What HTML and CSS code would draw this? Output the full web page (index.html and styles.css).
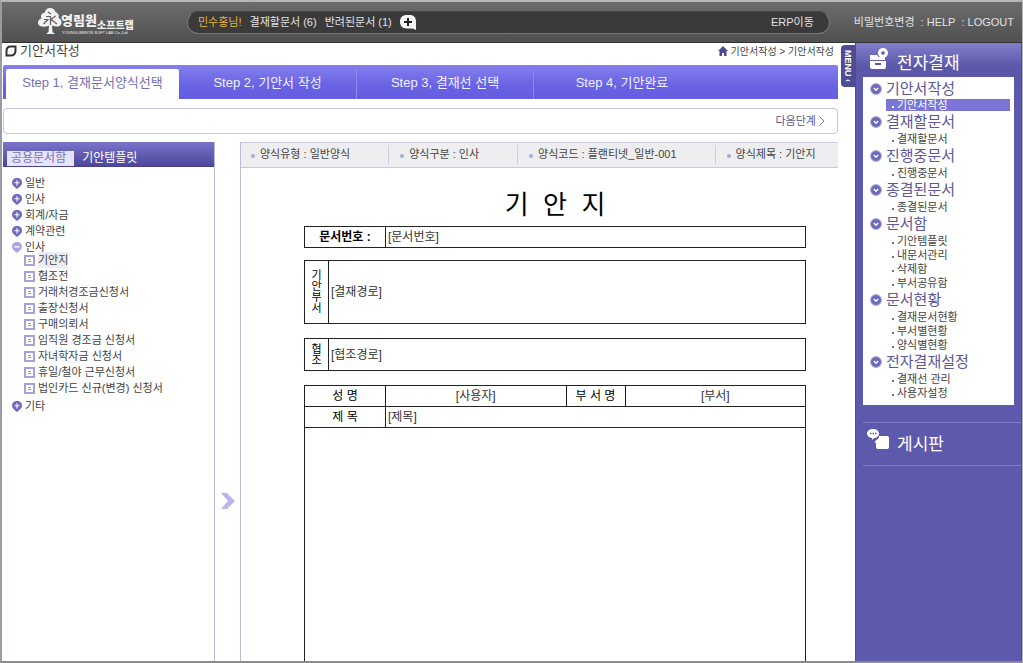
FILE: index.html
```html
<!DOCTYPE html>
<html lang="ko">
<head>
<meta charset="utf-8">
<title>기안서작성</title>
<link rel="stylesheet" href="styles.css">
</head>
<body>
<svg class="defs" aria-hidden="true">
  <symbol id="plus" viewBox="0 0 10 11"><path d="M5 0C8 0 10 2 10 4.600C10 7.500 7.500 9 5 11C2.500 9 0 7.500 0 4.600C0 2 2 0 5 0Z" fill="#6f68c0"/><path d="M5 2.200v5.200M2.400 4.800h5.200" stroke="#fff" stroke-width="1.100"/></symbol>
  <symbol id="minus" viewBox="0 0 10 11"><path d="M5 0C8 0 10 2 10 4.600C10 7.500 7.500 9 5 11C2.500 9 0 7.500 0 4.600C0 2 2 0 5 0Z" fill="#aaa5e2"/><path d="M2.400 4.800h5.200" stroke="#fff" stroke-width="1.300"/></symbol>
  <symbol id="doc" viewBox="0 0 11 11"><rect x="1" y="1" width="9" height="9" fill="#fff" stroke="#a6a2d8" stroke-width="2"/><path d="M4 4.500h3M4 6.500h3" stroke="#8f8bd0"/></symbol>
  <symbol id="down" viewBox="0 0 12 12"><circle cx="6" cy="6" r="5.500" fill="#6f69ba" stroke="#b9b5e2"/><path d="M3.800 5L6 7.200L8.200 5" fill="none" stroke="#fff" stroke-width="1.400"/></symbol>
</svg>
<header class="top">
  <a class="logo" href="#">
    <svg width="100" height="30" viewBox="0 0 100 30" role="img" aria-label="영림원소프트랩">
      <path d="M13 1C16 1 18 3 18.500 5C21 6 22.500 8 21.500 11C24 12 25.500 15 24 17.500C22.500 20 19 20 15 18.500L15.500 25L18 27H9L11.500 25L12 18.500C8 20.500 3 20 1.500 17.500C0 15 2 12 4.500 11.500C3 8 5 6 7.500 6C8 3 10 1 13 1Z" fill="#f2f2f2"/>
      <path d="M11 5L14 7M9 9.500H13.500V18M7 12.500H11L6.500 17M18.500 9L14 12.500L20 17" fill="none" stroke="#606060" stroke-width="1.200"/>
      <text class="logo-a" x="24" y="18">영림원</text>
      <text class="logo-b" x="60" y="22">소프트랩</text>
      <text class="logo-c" x="25" y="27">YOUNGLIMWON SOFT LAB Co.,Ltd.</text>
    </svg>
  </a>
  <div class="pill">
    <strong>민수홍님!</strong>
    <a href="#">결재할문서 (6)</a>
    <a href="#">반려된문서 (1)</a>
    <button class="add" type="button" aria-label="추가"><svg width="17" height="15" viewBox="0 0 17 15"><path d="M7 0H9.500C14 0 16 2.500 16 7V15L12.500 13.500H7C2.500 13.500 0 11 0 6.800S2.500 0 7 0Z" fill="#f5f5f5"/><path d="M8 3v8M4 7h8" stroke="#222" stroke-width="2"/></svg></button>
    <a class="erp" href="#">ERP이동</a>
  </div>
  <nav class="util"><a href="#">비밀번호변경</a><a href="#">: HELP</a><a href="#">: LOGOUT</a></nav>
</header>
<div class="body">
  <main class="main">
    <div class="titlebar">
      <h1><svg width="12" height="12" viewBox="0 0 12 12"><path d="M5.500 1.500H10.500V5.500C10.500 8.500 8.500 10.500 5.500 10.500H1.500V6C1.500 3.500 3 1.500 5.500 1.500Z" fill="none" stroke="#333" stroke-width="2"/></svg>기안서작성</h1>
      <div class="crumb"><svg width="10" height="10" viewBox="0 0 10 10"><path d="M5 0L10 5H8.500V10H6V7H4V10H1.500V5H0Z" fill="#4d4a90"/></svg><a href="#">기안서작성</a> &gt; <a href="#">기안서작성</a></div>
    </div>
    <nav class="steps">
      <a class="on" href="#">Step 1, 결재문서양식선택</a>
      <a href="#">Step 2, 기안서 작성</a>
      <a href="#">Step 3, 결재선 선택</a>
      <a href="#">Step 4, 기안완료</a>
    </nav>
    <div class="next"><button type="button">다음단계 <svg width="6" height="10" viewBox="0 0 6 10"><path d="M.5 .5L5 5L.5 9.500" fill="none" stroke="#7a76a8"/></svg></button></div>
    <div class="work">
      <section class="forms">
        <nav class="tabs"><a class="on" href="#">공용문서함</a><a href="#">기안템플릿</a></nav>
        <ul class="tree">
          <li><a href="#"><svg width="10" height="11"><use href="#plus"/></svg>일반</a></li>
          <li><a href="#"><svg width="10" height="11"><use href="#plus"/></svg>인사</a></li>
          <li><a href="#"><svg width="10" height="11"><use href="#plus"/></svg>회계/자금</a></li>
          <li><a href="#"><svg width="10" height="11"><use href="#plus"/></svg>계약관련</a></li>
          <li><a href="#"><svg width="10" height="11"><use href="#minus"/></svg>인사</a>
            <ul>
              <li><a href="#"><svg width="11" height="11"><use href="#doc"/></svg><span class="picked">기안지</span></a></li>
              <li><a href="#"><svg width="11" height="11"><use href="#doc"/></svg>협조전</a></li>
              <li><a href="#"><svg width="11" height="11"><use href="#doc"/></svg>거래처경조금신청서</a></li>
              <li><a href="#"><svg width="11" height="11"><use href="#doc"/></svg>출장신청서</a></li>
              <li><a href="#"><svg width="11" height="11"><use href="#doc"/></svg>구매의뢰서</a></li>
              <li><a href="#"><svg width="11" height="11"><use href="#doc"/></svg>임직원 경조금 신청서</a></li>
              <li><a href="#"><svg width="11" height="11"><use href="#doc"/></svg>자녀학자금 신청서</a></li>
              <li><a href="#"><svg width="11" height="11"><use href="#doc"/></svg>휴일/철야 근무신청서</a></li>
              <li><a href="#"><svg width="11" height="11"><use href="#doc"/></svg>법인카드 신규(변경) 신청서</a></li>
            </ul>
          </li>
          <li><a href="#"><svg width="10" height="11"><use href="#plus"/></svg>기타</a></li>
        </ul>
      </section>
      <button class="fold" type="button" aria-label="펼치기"><svg width="14" height="16" viewBox="0 0 14 16"><path d="M0 0H6L14 8L6 16H0L7 8Z" fill="#bab4ea"/></svg></button>
      <section class="preview">
        <ul class="info">
          <li>양식유형 : 일반양식</li>
          <li>양식구분 : 인사</li>
          <li>양식코드 : 플랜티넷_일반-001</li>
          <li>양식제목 : 기안지</li>
        </ul>
        <div class="paper">
          <h2>기  안  지</h2>
          <table class="number">
            <tr><th class="label" scope="row"><b>문서번호 :</b></th><td>[문서번호]</td></tr>
          </table>
          <table class="route tall">
            <tr><th class="side" scope="row">기<br>안<br>부<br>서</th><td>[결재경로]</td></tr>
          </table>
          <table class="route">
            <tr><th class="side" scope="row">협<br>조</th><td>[협조경로]</td></tr>
          </table>
          <table>
            <tr><th class="label" scope="row">성 명</th><td class="mid">[사용자]</td><th class="dept" scope="row">부 서 명</th><td class="mid">[부서]</td></tr>
            <tr><th class="label" scope="row">제 목</th><td colspan="3">[제목]</td></tr>
          </table>
          <div class="content"></div>
        </div>
      </section>
    </div>
  </main>
  <div class="rail"><button type="button">MENU ‹</button></div>
  <aside class="menu">
    <h2><svg width="22" height="22" viewBox="0 0 22 22"><path d="M2 7H9L10.500 9H17V12H2Z" fill="#fff"/><path d="M2 13H18V19Q18 21 16 21H4Q2 21 2 19Z" fill="#fff"/><path d="M7 16h6" stroke="#5b57a8" stroke-width="2"/><circle cx="15" cy="5" r="5" fill="#fff"/><circle cx="15" cy="5" r="1.800" fill="#5b57a8"/></svg>전자결재</h2>
    <nav class="groups">
      <h3><svg width="12" height="12"><use href="#down"/></svg>기안서작성</h3>
      <ul><li class="on"><a href="#">기안서작성</a></li></ul>
      <h3><svg width="12" height="12"><use href="#down"/></svg>결재할문서</h3>
      <ul><li><a href="#">결재할문서</a></li></ul>
      <h3><svg width="12" height="12"><use href="#down"/></svg>진행중문서</h3>
      <ul><li><a href="#">진행중문서</a></li></ul>
      <h3><svg width="12" height="12"><use href="#down"/></svg>종결된문서</h3>
      <ul><li><a href="#">종결된문서</a></li></ul>
      <h3><svg width="12" height="12"><use href="#down"/></svg>문서함</h3>
      <ul><li><a href="#">기안템플릿</a></li><li><a href="#">내문서관리</a></li><li><a href="#">삭제함</a></li><li><a href="#">부서공유함</a></li></ul>
      <h3><svg width="12" height="12"><use href="#down"/></svg>문서현황</h3>
      <ul><li><a href="#">결재문서현황</a></li><li><a href="#">부서별현황</a></li><li><a href="#">양식별현황</a></li></ul>
      <h3><svg width="12" height="12"><use href="#down"/></svg>전자결재설정</h3>
      <ul><li><a href="#">결재선 관리</a></li><li><a href="#">사용자설정</a></li></ul>
    </nav>
    <a class="board" href="#"><svg width="24" height="24" viewBox="0 0 24 24"><path d="M6 1C9.500 1 12 3 12 5.500S9.500 10 7 10L5 12V10C2 9.500 0 8 0 5.500S2.500 1 6 1Z" fill="#fff"/><path d="M3 5.500h1.500M5.500 5.500h1.500M8 5.500h1.500" stroke="#5b57a8" stroke-width="1.500"/><path d="M12 8H20Q22 8 22 10V19Q22 21 20 21H11Q9 21 9 19V15L7.500 14L9 12.500V12Q12 11 12 8Z" fill="#fff"/></svg>게시판</a>
  </aside>
</div>
</body>
</html>
```

FILE: styles.css
```css
* { box-sizing: border-box; }
body {
  margin: 0;
  min-height: 100vh;
  display: flex;
  flex-direction: column;
  border: 2px solid #b5b5b5;
  border-left-color: #9b9aa8;
  border-right-width: 1px;
  border-bottom-color: #8b8b8b;
  background: #fff;
  color: #444;
  font: 11px/16px "Liberation Sans", "Noto Sans CJK KR", sans-serif;
}
a { color: inherit; text-decoration: none; }
ul { list-style: none; margin: 0; padding: 0; }
h1, h2, h3 { margin: 0; font-weight: 400; }
button { font: inherit; color: inherit; border: 0; padding: 0; background: none; cursor: pointer; }
svg { flex: none; }
.defs { display: none; }

.top {
  display: flex;
  align-items: center;
  height: 41px;
  padding-right: 8px;
  background: linear-gradient(#6c6c6c, #505050);
  border-bottom: 1px solid #333;
  color: #e2e2e2;
}
.logo { width: 185px; padding-left: 35px; display: flex; }
.logo text { fill: #f2f2f2; }
.logo-a { font-size: 13px; font-weight: 900; }
.logo-b { font-size: 10px; font-weight: 900; }
.logo-c { font-size: 4px; }
.pill {
  flex: 1;
  display: flex;
  align-items: center;
  gap: 8px;
  height: 23px;
  padding: 0 15px 0 10px;
  border: 1px solid #777;
  border-top-color: #444;
  border-radius: 12px;
  background: #3a3a3a;
}
.pill strong { color: #e9b530; font-weight: 400; }
.add { display: flex; }
.erp { margin-left: auto; }
.util { display: flex; gap: 6px; padding-left: 24px; }

.body { flex: 1; display: flex; }
.main { flex: 1; min-width: 0; display: flex; flex-direction: column; padding-left: 1px; }
.titlebar { display: flex; justify-content: space-between; height: 22px; padding: 0 4px 0 2px; }
.titlebar h1 { display: flex; align-items: center; gap: 3px; height: 16px; font-size: 13px; }
.crumb { height: 18px; font-size: 10px; line-height: 18px; }
.crumb svg { margin-right: 3px; vertical-align: -1px; }

.steps {
  display: flex;
  height: 34px;
  padding: 4px 0 0 3px;
  border-radius: 2px 2px 0 0;
  background: linear-gradient(#8580ec, #6962e4 60%, #635de0);
  color: #f1f0ff;
  font-size: 13px;
  line-height: 28px;
  text-align: center;
}
.steps a { width: 177px; height: 30px; }
.steps a.on { width: 173px; border-radius: 2px 2px 0 0; background: #fff; color: #7570b6; }
.steps a + a + a { border-left: 1px solid #8d88ea; }

.next {
  display: flex;
  justify-content: flex-end;
  align-items: center;
  height: 26px;
  margin: 9px 0 8px;
  padding-right: 12px;
  border: 1px solid #c6c4de;
  border-radius: 4px;
  color: #5c5892;
}
.next svg { vertical-align: -1px; }

.work { flex: 1; display: flex; }
.forms { width: 212px; border-right: 1px solid #bdbbdc; }
.tabs {
  display: flex;
  align-items: flex-end;
  height: 25px;
  padding-left: 4px;
  background: linear-gradient(#7a75cc, #4c4799);
  border-bottom: 1px solid #47428f;
  color: #fff;
  font-size: 12px;
  line-height: 15px;
}
.tabs a { padding: 0 8px; }
.tabs a.on { padding: 0 8px 0 4px; background: #e6e4fa; color: #7772b8; }
.tree { padding: 8px 0 0 9px; }
.tree a { display: flex; align-items: center; gap: 3px; height: 16px; }
.tree ul { margin: -3px 0 2px; padding-left: 12px; }
.picked { background: #ececf2; }
.fold { display: flex; width: 25px; align-items: center; justify-content: center; padding-top: 198px; }

.preview { flex: 1; display: flex; flex-direction: column; border-left: 1px solid #bdbbdc; }
.info {
  display: flex;
  height: 26px;
  padding: 2px 0;
  border: solid #c9c7e6;
  border-width: 1px 0;
  background: #eeeef0;
}
.info li { padding: 1px 38px 0 11px; border-left: 1px solid #cfcde8; }
.info li:first-child { border-left: 0; padding-left: 10px; }
.info li:last-child { padding-right: 0; }
.info li::before {
  content: "";
  display: inline-block;
  width: 4px;
  height: 4px;
  margin-right: 5px;
  border-radius: 50%;
  background: #aaa7d6;
}

.paper { flex: 1; display: flex; flex-direction: column; padding: 16px 32px 0 63px; }
.paper h2 {
  color: #000;
  font-size: 26px;
  line-height: 42px;
  text-align: center;
  white-space: pre;
}
table { width: 100%; border-collapse: collapse; table-layout: fixed; font-size: 12px; color: #333; }
td, th { height: 21px; padding: 0 2px; border: 1px solid #222; text-align: left; line-height: 16px; }
th { padding: 0; text-align: center; font-weight: 400; color: #000; }
th b { font-weight: 700; }
.number { margin-bottom: 12px; }
.label { width: 81px; }
.side { width: 24px; font-size: 11px; line-height: 11px; }
.route { height: 33px; margin-bottom: 14px; }
.tall { height: 64px; }
.dept { width: 59px; }
td.mid { text-align: center; }
.content { flex: 1; min-height: 120px; border: solid #222; border-width: 0 1px; }

.rail { width: 17px; padding: 2px 0 0 3px; }
.rail button {
  display: flex;
  align-items: center;
  justify-content: center;
  width: 14px;
  height: 42px;
  border-radius: 4px 0 0 4px;
  background: #504c94;
  color: #fff;
  font-size: 9px;
  font-weight: 700;
  line-height: 14px;
  writing-mode: vertical-rl;
}
.menu { width: 167px; border: solid #4f4b98; border-width: 0 1px; background: linear-gradient(#837ec8, #5b57a8 24px, #5d59ad 60px); }
.menu h2, .board { display: flex; align-items: center; gap: 7px; color: #fff; font-size: 17px; line-height: 24px; }
.menu h2 { height: 34px; padding: 7px 0 0 12px; }
.menu h2 svg { margin-bottom: 10px; }
.groups { margin: 0 7px; padding: 2px 4px 5px 7px; background: #fff; }
.groups h3 { display: flex; align-items: center; gap: 4px; height: 20px; color: #5c5799; font-size: 15px; line-height: 20px; }
.groups ul { padding-left: 16px; }
.groups li { display: flex; align-items: center; gap: 3px; height: 14px; padding-left: 6px; line-height: 14px; }
.groups li::before { content: ""; width: 2px; height: 2px; margin-top: 4px; background: #777; }
.groups li.on { height: 12px; margin-bottom: 1px; line-height: 12px; background: #7b75d8; color: #fff; }
.groups li.on::before { background: #fff; }
.board { height: 44px; margin: 17px 0 0 7px; padding: 2px 0 0 4px; border: solid #817dc4; border-width: 1px 0; gap: 6px; }
.board svg { margin-bottom: 10px; }
```
